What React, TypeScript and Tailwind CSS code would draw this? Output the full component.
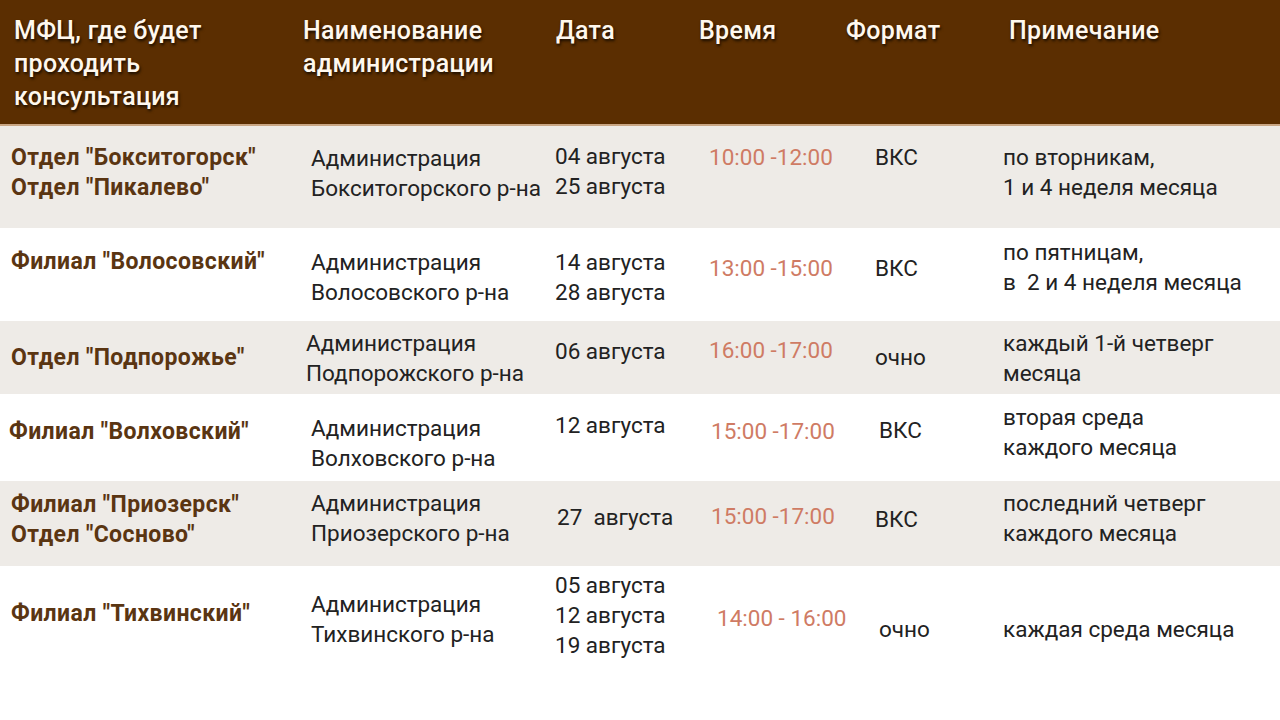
import React from "react";

type Cell = { lines: string[]; pt: number; pl: number };
type Row = { h: number; bg: string; cells: Cell[] };

const rows: Row[] = [
  {
    h: 102,
    bg: "bg-[#eeebe7]",
    cells: [
      { lines: ['Отдел "Бокситогорск"', 'Отдел "Пикалево"'], pt: 17, pl: 11 },
      { lines: ["Администрация", "Бокситогорского р-на"], pt: 17, pl: 11 },
      { lines: ["04 августа", "25 августа"], pt: 15, pl: 5 },
      { lines: ["10:00 -12:00"], pt: 16, pl: 14 },
      { lines: ["ВКС"], pt: 16, pl: 35 },
      { lines: ["по вторникам,", "1 и 4 неделя месяца"], pt: 16, pl: 3 },
    ],
  },
  {
    h: 93,
    bg: "bg-white",
    cells: [
      { lines: ['Филиал "Волосовский"'], pt: 19, pl: 11 },
      { lines: ["Администрация", "Волосовского р-на"], pt: 19, pl: 11 },
      { lines: ["14 августа", "28 августа"], pt: 19, pl: 5 },
      { lines: ["13:00 -15:00"], pt: 25, pl: 14 },
      { lines: ["ВКС"], pt: 25, pl: 35 },
      { lines: ["по пятницам,", "в  2 и 4 неделя месяца"], pt: 9, pl: 3 },
    ],
  },
  {
    h: 73,
    bg: "bg-[#eeebe7]",
    cells: [
      { lines: ['Отдел "Подпорожье"'], pt: 22, pl: 11 },
      { lines: ["Администрация", "Подпорожского р-на"], pt: 7, pl: 6 },
      { lines: ["06 августа"], pt: 15, pl: 5 },
      { lines: ["16:00 -17:00"], pt: 14, pl: 14 },
      { lines: ["очно"], pt: 21, pl: 35 },
      { lines: ["каждый 1-й четверг", "месяца"], pt: 7, pl: 3 },
    ],
  },
  {
    h: 87,
    bg: "bg-white",
    cells: [
      { lines: ['Филиал "Волховский"'], pt: 23, pl: 9 },
      { lines: ["Администрация", "Волховского р-на"], pt: 19, pl: 11 },
      { lines: ["12 августа"], pt: 16, pl: 5 },
      { lines: ["15:00 -17:00"], pt: 22, pl: 16 },
      { lines: ["ВКС"], pt: 21, pl: 39 },
      { lines: ["вторая среда", "каждого месяца"], pt: 8, pl: 3 },
    ],
  },
  {
    h: 85,
    bg: "bg-[#eeebe7]",
    cells: [
      { lines: ['Филиал "Приозерск"', 'Отдел "Сосново"'], pt: 9, pl: 11 },
      { lines: ["Администрация", "Приозерского р-на"], pt: 7, pl: 11 },
      { lines: ["27  августа"], pt: 21, pl: 7 },
      { lines: ["15:00 -17:00"], pt: 20, pl: 16 },
      { lines: ["ВКС"], pt: 23, pl: 35 },
      { lines: ["последний четверг", "каждого месяца"], pt: 7, pl: 3 },
    ],
  },
  {
    h: 154,
    bg: "bg-white",
    cells: [
      { lines: ['Филиал "Тихвинский"'], pt: 33, pl: 11 },
      { lines: ["Администрация", "Тихвинского р-на"], pt: 23, pl: 11 },
      { lines: ["05 августа", "12 августа", "19 августа"], pt: 4, pl: 5 },
      { lines: ["14:00 - 16:00"], pt: 37, pl: 22 },
      { lines: ["очно"], pt: 48, pl: 39 },
      { lines: ["каждая среда месяца"], pt: 48, pl: 3 },
    ],
  },
];

const grid = "grid grid-cols-[300px_250px_145px_145px_160px_1fr]";

const headers: { lines: string[]; pl: number }[] = [
  { lines: ["МФЦ, где будет", "проходить", "консультация"], pl: 14 },
  { lines: ["Наименование", "администрации"], pl: 3 },
  { lines: ["Дата"], pl: 6 },
  { lines: ["Время"], pl: 4 },
  { lines: ["Формат"], pl: 6 },
  { lines: ["Примечание"], pl: 9 },
];

const colClass = [
  "font-bold text-[23px] tracking-[0.4px] text-[#5a3512]",
  "text-[22.5px] text-[#222222]",
  "text-[22.5px] text-[#222222]",
  "text-[22.5px] text-[#cf7b64]",
  "text-[22.5px] text-[#222222]",
  "text-[22.5px] text-[#222222]",
];

export default function App() {
  return (
    <div className="w-[1280px] h-[720px] overflow-hidden bg-white font-['Roboto','Noto_Sans',sans-serif]">
      <div className={`${grid} h-[124px] bg-[#5b2e01] pt-[14px]`}>
        {headers.map((h, i) => (
          <div
            key={i}
            style={{ paddingLeft: h.pl }}
            className="text-[25px] leading-[33px] tracking-[0.3px] font-medium text-[#fff8ee] [text-shadow:1px_2px_3px_rgba(0,0,0,0.75)] whitespace-nowrap"
          >
            {h.lines.map((l, j) => (
              <div key={j}>{l}</div>
            ))}
          </div>
        ))}
      </div>
      <div className="h-[2px] bg-[#c9a684]" />
      {rows.map((r, ri) => (
        <div key={ri} style={{ height: r.h }} className={`${grid} ${r.bg}`}>
          {r.cells.map((c, ci) => (
            <div
              key={ci}
              style={{ paddingTop: c.pt, paddingLeft: c.pl }}
              className={`leading-[30px] whitespace-pre ${colClass[ci]}`}
            >
              {c.lines.map((l, j) => (
                <div key={j}>{l}</div>
              ))}
            </div>
          ))}
        </div>
      ))}
    </div>
  );
}
